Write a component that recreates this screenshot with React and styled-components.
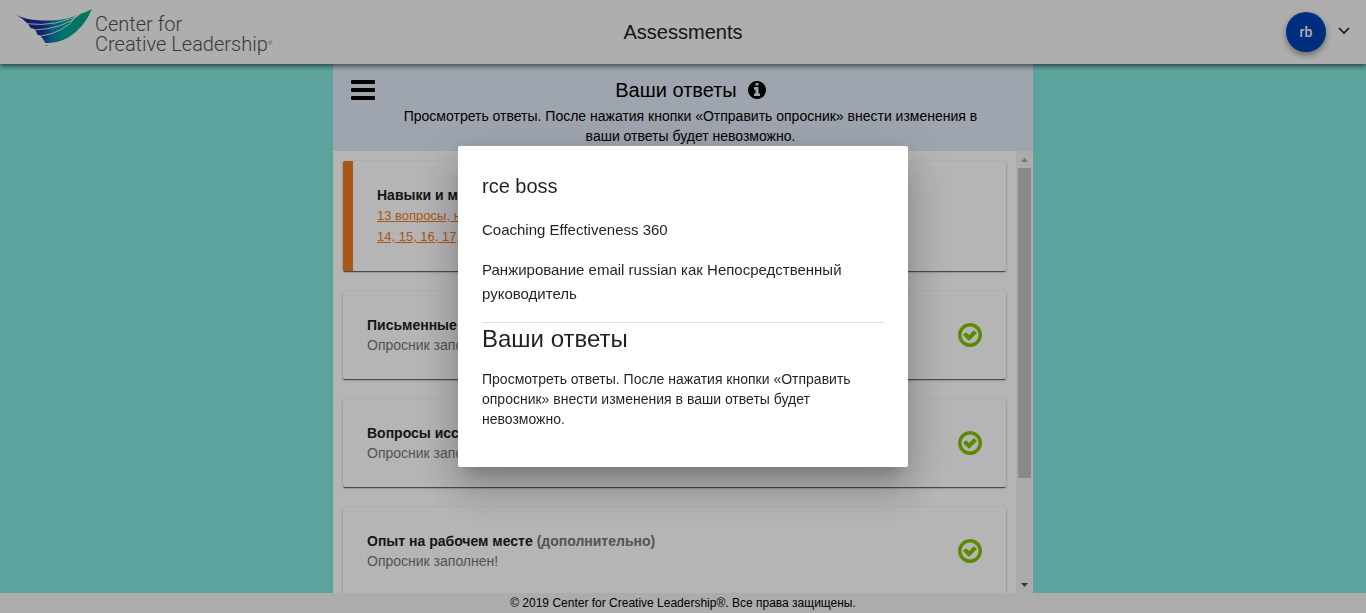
import React from 'react';
import styled, { createGlobalStyle } from 'styled-components';

const GlobalStyle = createGlobalStyle`
  * { box-sizing: border-box; }
  body {
    margin: 0;
    font-family: "Liberation Sans", Arial, sans-serif;
    font-size: 14px;
    line-height: 20px;
    color: #000;
  }
  h1, h2, h3, p { margin: 0; font-weight: 400; }
  button { border: 0; padding: 0; background: none; font: inherit; color: inherit; cursor: pointer; }
`;

const Page = styled.div`
  display: flex;
  flex-direction: column;
  height: 100vh;
  overflow: hidden;
  background: #82e6dd;
`;

const TopBar = styled.header`
  position: relative;
  z-index: 1;
  flex: none;
  display: grid;
  grid-template-columns: 1fr auto 1fr;
  align-items: center;
  height: 64px;
  padding: 0 16px;
  background: #f5f5f5;
  box-shadow: 0 2px 5px rgba(0, 0, 0, 0.6);
`;

const Brand = styled.a`
  display: flex;
  align-items: center;
  gap: 2px;
  color: #4c5457;
  text-decoration: none;
`;

const BrandMark = styled.svg`
  width: 77px;
  height: 46px;
`;

const BrandName = styled.span`
  padding-top: 3px;
  font-family: Roboto, sans-serif;
  font-weight: 300;
  font-size: 20px;
  line-height: 20px;
`;

const Registered = styled.sup`
  font-size: 6px;
  line-height: 6px;
  vertical-align: 6px;
`;

const AppTitle = styled.h1`
  font-size: 20px;
  line-height: 32px;
  color: #212121;
`;

const Account = styled.div`
  display: flex;
  justify-content: flex-end;
  align-items: center;
  gap: 12px;
`;

const Avatar = styled.span`
  display: grid;
  place-items: center;
  width: 40px;
  height: 40px;
  border-radius: 50%;
  background: #0041b2;
  color: #f5f5f5;
  font-family: Roboto, sans-serif;
  font-weight: 500;
  box-shadow: 0 3px 6px rgba(0, 0, 0, 0.4);
`;

const AccountToggle = styled.button`
  display: flex;
`;

const Panel = styled.main`
  flex: 1;
  min-height: 0;
  display: flex;
  flex-direction: column;
  width: 100%;
  max-width: 700px;
  margin: 0 auto;
  background: #fff;
`;

const PanelHeader = styled.div`
  display: flex;
  align-items: flex-start;
  padding: 10px 45px 5px 18px;
  background: #e0e9f6;
`;

const MenuButton = styled.button`
  flex: none;
  display: flex;
  flex-direction: column;
  gap: 4px;
  width: 24px;
  margin: 6px 18px 0 0;
`;

const MenuBar = styled.span`
  height: 4px;
  border-radius: 1px;
  background: #000;
`;

const Intro = styled.div`
  flex: 1;
  text-align: center;
`;

const PanelTitle = styled.h2`
  display: flex;
  justify-content: center;
  align-items: center;
  gap: 11px;
  font-size: 20px;
  line-height: 32px;
`;

const InfoButton = styled.button`
  display: flex;
`;

const ScrollArea = styled.div`
  flex: 1;
  min-height: 0;
  display: flex;
`;

const CardList = styled.div`
  flex: 1;
  min-width: 0;
  display: flex;
  flex-direction: column;
  gap: 20px;
  padding: 10px;
  overflow: hidden;
`;

const Card = styled.section`
  flex: none;
  display: flex;
  align-items: center;
  justify-content: space-between;
  padding: 24px;
  border-radius: 2px;
  border-left: ${({ $alert }) => ($alert ? '10px solid #ef7923' : '0')};
  background: #fff;
  box-shadow: 0 2px 1px -1px rgba(0, 0, 0, 0.4), 0 1px 1px rgba(0, 0, 0, 0.28), 0 1px 3px rgba(0, 0, 0, 0.24);
`;

const CardTitle = styled.h3`
  font-size: 14px;
  font-weight: 700;
  color: #212121;
`;

const Optional = styled.span`
  color: #757575;
`;

const CardStatus = styled.p`
  color: #757575;
`;

const Missing = styled.a`
  display: block;
  font-size: 13px;
  line-height: 21px;
  color: #ef7923;
`;

const Track = styled.div`
  flex: none;
  display: flex;
  flex-direction: column;
  align-items: center;
  width: 17px;
  background: #f1f1f1;
`;

const TrackEnd = styled.span`
  display: grid;
  place-items: center;
  width: 17px;
  height: 17px;
  color: ${({ $active }) => ($active ? '#505050' : '#a3a3a3')};
`;

const TrackBody = styled.div`
  flex: 1;
  width: 13px;
`;

const Thumb = styled.div`
  height: 76%;
  background: #c1c1c1;
`;

const Footer = styled.footer`
  flex: none;
  font-size: 12px;
  text-align: center;
  background: #f3f3f3;
`;

const Backdrop = styled.div`
  position: fixed;
  inset: 0;
  z-index: 2;
  display: grid;
  place-items: center;
  background: rgba(0, 0, 0, 0.29);
`;

const Dialog = styled.div`
  width: 450px;
  max-width: 80vw;
  padding: 24px;
  border-radius: 2px;
  background: #fff;
  color: rgba(0, 0, 0, 0.87);
  box-shadow: 0 11px 15px -7px rgba(0, 0, 0, 0.2), 0 24px 38px 3px rgba(0, 0, 0, 0.14), 0 9px 46px 8px rgba(0, 0, 0, 0.12);
`;

const DialogName = styled.h2`
  font-size: 20px;
  line-height: 32px;
`;

const DialogLine = styled.p`
  margin: 16px 0;
  font-size: 15px;
  line-height: 24px;
`;

const DialogHeading = styled.h3`
  border-top: 1px solid rgba(0, 0, 0, 0.12);
  font-size: 24px;
  line-height: 32px;
`;

const DialogText = styled.p`
  margin: 14px 0;
`;

const note =
  'Просмотреть ответы. После нажатия кнопки «Отправить опросник» внести изменения в ваши ответы будет невозможно.';

const sections = [
  { title: 'Письменные комментарии' },
  { title: 'Вопросы исследования' },
  { title: 'Опыт на рабочем месте', optional: true },
];

function CheckIcon() {
  return (
    <svg width="24" height="24" viewBox="0 128 1536 1536" fill="#80c200" aria-hidden="true">
      <path d="M1171 813l-422 422q-19 19-45 19t-45-19l-294-294q-19-19-19-45t19-45l102-102q19-19 45-19t45 19l147 147 275-275q19-19 45-19t45 19l102 102q19 19 19 45t-19 45zm141 83q0-148-73-273t-198-198-273-73-273 73-198 198-73 273 73 273 198 198 273 73 273-73 198-198 73-273zm224 0q0 209-103 385.5t-279.5 279.5-385.5 103-385.5-103-279.5-279.5-103-385.5 103-385.5 279.5-279.5 385.5-103 385.5 103 279.5 279.5 103 385.5z" />
    </svg>
  );
}

function InfoIcon() {
  return (
    <svg width="18" height="18" viewBox="128 128 1536 1536" aria-hidden="true">
      <path d="M1152 1376v-160q0-14-9-23t-23-9h-96v-512q0-14-9-23t-23-9h-320q-14 0-23 9t-9 23v160q0 14 9 23t23 9h96v320h-96q-14 0-23 9t-9 23v160q0 14 9 23t23 9h448q14 0 23-9t9-23zm-128-896v-160q0-14-9-23t-23-9h-192q-14 0-23 9t-9 23v160q0 14 9 23t23 9h192q14 0 23-9t9-23zm640 416q0 209-103 385.5t-279.5 279.5-385.5 103-385.5-103-279.5-279.5-103-385.5 103-385.5 279.5-279.5 385.5-103 385.5 103 279.5 279.5 103 385.5z" />
    </svg>
  );
}

function Wing() {
  return (
    <BrandMark viewBox="48 27 231 138" aria-hidden="true">
      <defs>
        <linearGradient id="wing" gradientUnits="userSpaceOnUse" x1="50" y1="60" x2="270" y2="80">
          <stop offset="0" stopColor="#1d1a7c" />
          <stop offset="0.36" stopColor="#17309a" />
          <stop offset="0.5" stopColor="#0b7fae" />
          <stop offset="0.66" stopColor="#00a394" />
          <stop offset="1" stopColor="#00a77f" />
        </linearGradient>
      </defs>
      <path
        fill="url(#wing)"
        d="M50 45Q76 58 108 60Q155 65 200 56Q222 50 240 42Q260 36 276 27Q252 84 204 113Q172 130 136 129Q130 116 119 106L112 104Q110 94 102 86L92 84Q88 75 80 68Q68 56 50 45Z"
      />
      <g fill="none" stroke="#f5f5f5" strokeWidth="2.6">
        <path d="M80 71Q168 82 242 42" />
        <path d="M101 90Q188 88 238 44" />
        <path d="M117 109Q192 100 230 48" />
      </g>
      <text x="134" y="137" fontSize="7" fill="#5d6467">
        TM
      </text>
    </BrandMark>
  );
}

function Arrow({ down }) {
  return (
    <svg width="7" height="4" viewBox="0 0 7 4" fill="currentColor" aria-hidden="true">
      <path d={down ? 'M0 0h7L3.5 4z' : 'M0 4h7L3.5 0z'} />
    </svg>
  );
}

export default function App() {
  return (
    <>
      <GlobalStyle />
      <Page>
        <TopBar>
          <Brand href="#home">
            <Wing />
            <BrandName>
              Center for
              <br />
              Creative Leadership<Registered>®</Registered>
            </BrandName>
          </Brand>
          <AppTitle>Assessments</AppTitle>
          <Account>
            <Avatar>rb</Avatar>
            <AccountToggle aria-label="Account menu">
              <svg width="12" height="10" viewBox="0 0 12 10" fill="none" stroke="#212121" strokeWidth="1.6" aria-hidden="true">
                <path d="M1 1l5 5 5-5" />
              </svg>
            </AccountToggle>
          </Account>
        </TopBar>

        <Panel>
          <PanelHeader>
            <MenuButton aria-label="Меню">
              <MenuBar />
              <MenuBar />
              <MenuBar />
            </MenuButton>
            <Intro>
              <PanelTitle>
                Ваши ответы
                <InfoButton aria-label="Информация">
                  <InfoIcon />
                </InfoButton>
              </PanelTitle>
              <p>{note}</p>
            </Intro>
          </PanelHeader>

          <ScrollArea>
            <CardList>
              <Card $alert>
                <div>
                  <CardTitle>Навыки и модели поведения</CardTitle>
                  <Missing href="#missing">
                    13 вопросы, на которые нет ответа: 11, 12, 13,
                    <br />
                    14, 15, 16, 17, 18, 19, 20
                  </Missing>
                </div>
              </Card>
              {sections.map(({ title, optional }) => (
                <Card key={title}>
                  <div>
                    <CardTitle>
                      {title} {optional && <Optional>(дополнительно)</Optional>}
                    </CardTitle>
                    <CardStatus>Опросник заполнен!</CardStatus>
                  </div>
                  <CheckIcon />
                </Card>
              ))}
            </CardList>
            <Track aria-hidden="true">
              <TrackEnd>
                <Arrow />
              </TrackEnd>
              <TrackBody>
                <Thumb />
              </TrackBody>
              <TrackEnd $active>
                <Arrow down />
              </TrackEnd>
            </Track>
          </ScrollArea>
        </Panel>

        <Footer>© 2019 Center for Creative Leadership®. Все права защищены.</Footer>
      </Page>

      <Backdrop>
        <Dialog role="dialog" aria-modal="true" aria-labelledby="dialog-name">
          <DialogName id="dialog-name">rce boss</DialogName>
          <DialogLine>Coaching Effectiveness 360</DialogLine>
          <DialogLine>Ранжирование email russian как Непосредственный руководитель</DialogLine>
          <DialogHeading>Ваши ответы</DialogHeading>
          <DialogText>{note}</DialogText>
        </Dialog>
      </Backdrop>
    </>
  );
}
